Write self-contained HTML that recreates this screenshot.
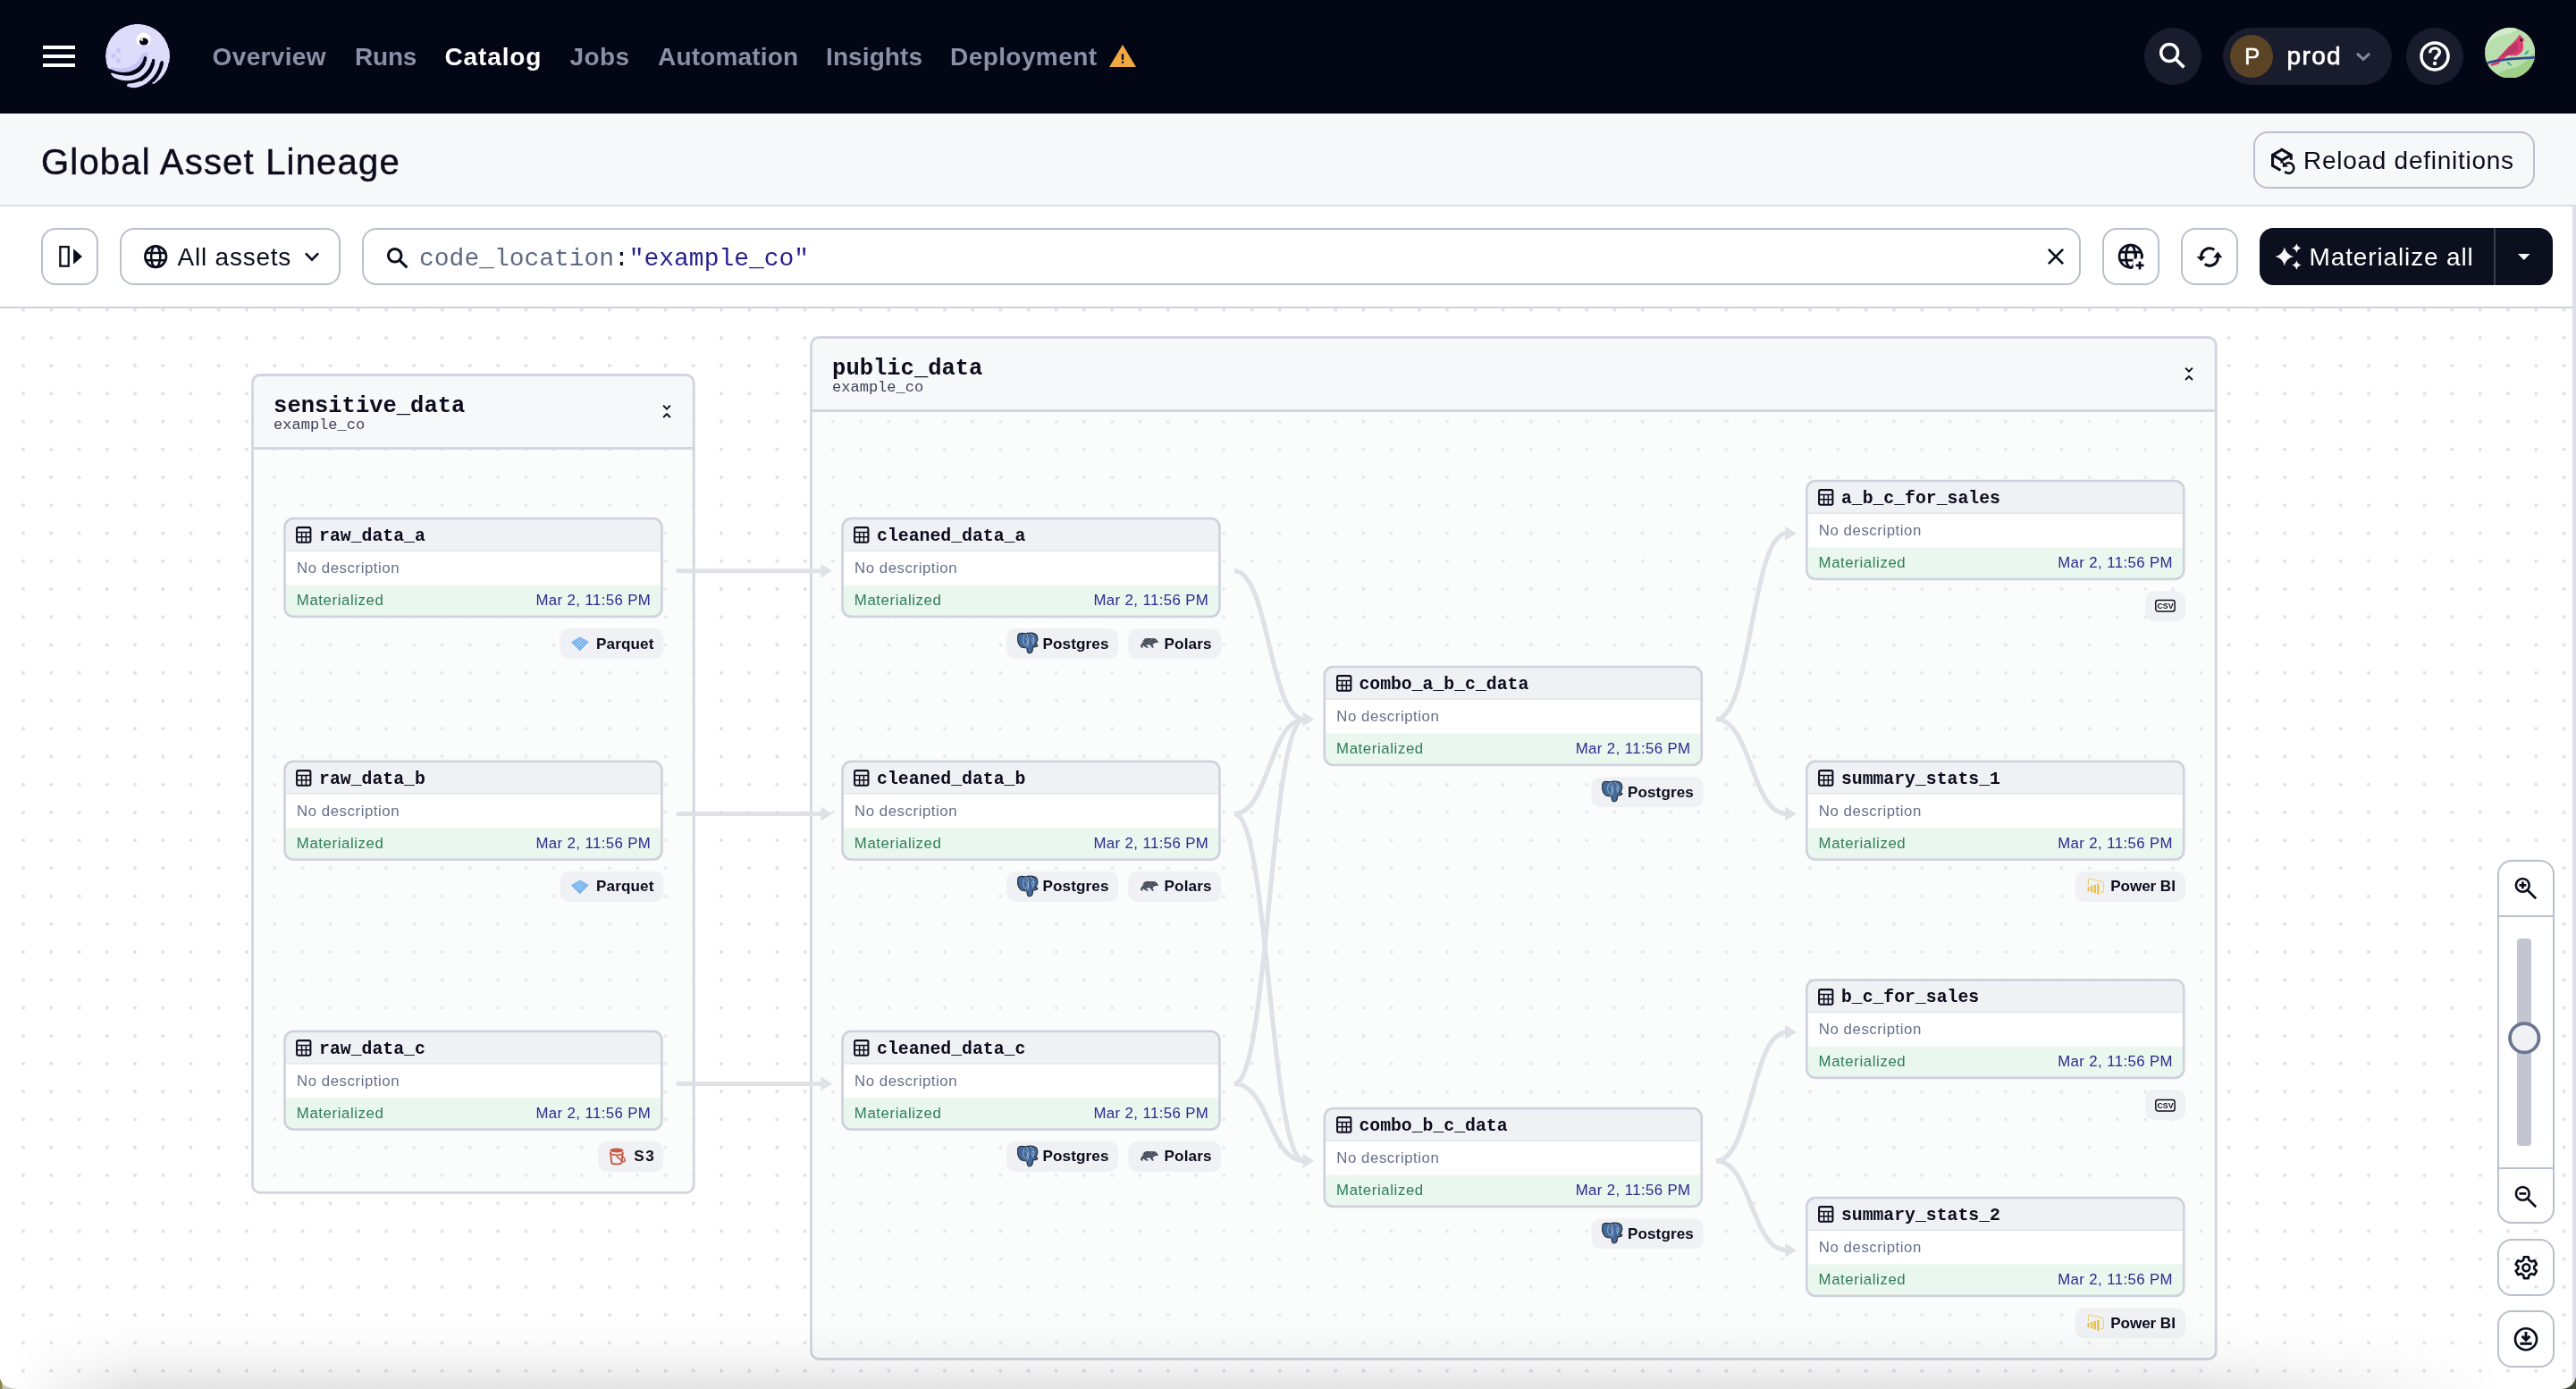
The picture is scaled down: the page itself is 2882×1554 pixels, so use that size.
<!DOCTYPE html>
<html lang="en"><head><meta charset="utf-8"><title>Global Asset Lineage</title>
<style>
html,body{margin:0;padding:0}
body{width:2882px;height:1554px;overflow:hidden;background:#fff;position:relative;font-family:"Liberation Sans",sans-serif;color:#0a0d1c}
.abs,#nav *,#hdr *,#tb *{position:absolute}
#nav{position:absolute;left:0;top:0;width:2882px;height:127px;background:#030615}
#nav .ni{top:50.3px;font:700 28px/28px "Liberation Sans",sans-serif;color:#8a91a6;white-space:pre}
#nav .ni.on{color:#fff}
#nav .circ{background:#191c2c;border-radius:32px;height:64.4px;top:30.7px}
#hdr{position:absolute;left:0;top:127px;width:2882px;height:102px;background:#f7f8fa;border-bottom:2px solid #dadce3}
#hdr h1{margin:0;left:46px;top:33.9px;font:400 40px/40px "Liberation Sans",sans-serif;letter-spacing:1.19px;white-space:pre;-webkit-text-stroke:0.45px #0a0d1c}
.btn{box-sizing:border-box;border:2px solid #b9bfcc;border-radius:16px;height:64px;background:transparent}
#tb{position:absolute;left:0;top:231px;width:2878px;height:112px;background:#fff;border-bottom:2px solid #cfd2db}
#tb .btn{top:24px}
.t28{font:400 28px/28px "Liberation Sans",sans-serif;white-space:pre}
#strip{position:absolute;left:2878px;top:230px;width:4px;height:1324px;background:#dfe0e7}
#graph{position:absolute;left:0;top:345px;width:2878px;height:1209px;overflow:hidden;background:#fff}
#graph svg.shapes{position:absolute;left:0;top:0}
#graph .tx{position:absolute;white-space:pre}
.gt{font:700 25.5px/25.5px "Liberation Mono",monospace;color:#0a0d1c}
.gs{font:400 17px/17px "Liberation Mono",monospace;color:#3b4256}
.nn{font:700 19.8px/19.8px "Liberation Mono",monospace;color:#0a0d1c}
.nd{font:400 16.8px/16.8px "Liberation Sans",sans-serif;color:#67708a;letter-spacing:0.56px}
.mat{font:400 16.8px/16.8px "Liberation Sans",sans-serif;color:#2f7d56;letter-spacing:0.6px}
.ts{font:400 16.8px/16.8px "Liberation Sans",sans-serif;color:#2b2a8f;letter-spacing:0.4px}
.tag{position:absolute;height:34px}
.tag svg{position:absolute}
.tt{position:absolute;top:8.5px;font:700 17.1px/17.1px "Liberation Sans",sans-serif;color:#0a0d1c;white-space:pre;letter-spacing:0.12px}
.ico{position:absolute}
#nav,#hdr,#tb,#graph{will-change:transform}
</style></head>
<body>
<div id="nav">
<svg style="left:48px;top:49px" width="36" height="28" viewBox="0 0 36 28"><path d="M0 4H36M0 14H36M0 24H36" stroke="#fff" stroke-width="4"/></svg>
<svg style="left:100px;top:10px" width="110" height="110" viewBox="0 0 1389 1389">
<defs><clipPath id="lc"><circle cx="681.5" cy="666" r="454"/></clipPath>
<clipPath id="hc"><path d="M0,0H1389V700H800C790,790 700,880 560,900C460,915 360,895 300,870L200,930L0,930Z"/></clipPath>
<clipPath id="ec"><rect x="600" y="300" width="300" height="212"/></clipPath></defs>
<g clip-path="url(#lc)">
<g clip-path="url(#hc)"><circle cx="681.5" cy="666" r="454" fill="#dedcfb"/>
<path d="M300,850C420,905 640,890 740,720C760,680 790,650 830,650" fill="none" stroke="#c9c4f6" stroke-width="80"/>
<circle cx="408" cy="585" r="33" fill="#c9c4f6"/><circle cx="338" cy="658" r="33" fill="#c9c4f6"/><circle cx="408" cy="728" r="33" fill="#c9c4f6"/></g>
<path d="M1000,560L1140,560L1140,760L780,760Z" fill="#dedcfb"/>
<g fill="none" stroke="#dedcfb" stroke-width="70" stroke-linecap="round">
<path d="M848,700C842,800 760,930 620,968C520,992 420,968 338,925"/>
<path d="M965,720C965,820 900,940 790,1020C720,1062 640,1085 565,1088"/>
<path d="M1085,740C1085,840 1020,960 925,1040"/></g>
<g fill="none" stroke="#030615" stroke-width="42" stroke-linecap="round"><path d="M790,692C772,800 665,900 525,915C430,925 345,900 235,845"/><path d="M905,724C897,830 835,935 735,1000"/><path d="M1025,754C1016,850 970,945 900,1015"/></g>
</g>
<g clip-path="url(#ec)"><circle cx="765" cy="437" r="102" fill="#fff"/><ellipse cx="770" cy="462" rx="62" ry="52" fill="#030615"/><circle cx="742" cy="437" r="17" fill="#fff"/></g>
</svg>
<span class="ni" style="left:237.6px;letter-spacing:0.35px">Overview</span>
<span class="ni" style="left:397px;letter-spacing:-0.2px">Runs</span>
<span class="ni on" style="left:497.5px;letter-spacing:0.88px">Catalog</span>
<span class="ni" style="left:637.5px;letter-spacing:0.4px">Jobs</span>
<span class="ni" style="left:736px;letter-spacing:0.17px">Automation</span>
<span class="ni" style="left:924px;letter-spacing:0.1px">Insights</span>
<span class="ni" style="left:1063px;letter-spacing:0.42px">Deployment</span>
<svg style="left:1240px;top:49px" width="32" height="27" viewBox="0 0 32 27"><path d="M16 0.9L31 25.9H1Z" fill="#f0a840"/><rect x="14.85" y="11.3" width="2.3" height="6.6" fill="#0a0d1c"/><rect x="14.85" y="19.6" width="2.3" height="2.1" fill="#0a0d1c"/></svg>
<div class="circ" style="left:2398.8px;width:64.4px"></div>
<svg style="left:2412px;top:44px" width="38" height="38" viewBox="0 0 38 38"><circle cx="15.1" cy="15" r="9.4" fill="none" stroke="#fff" stroke-width="3.5"/><path d="M21.8 21.8L31.4 31.4" stroke="#fff" stroke-width="3.7"/></svg>
<div class="circ" style="left:2486.9px;width:189px"></div>
<div style="left:2494.8px;top:38.6px;width:48.4px;height:48.4px;border-radius:50%;background:#5b4425"></div>
<span style="left:2511px;top:49.8px;font:400 26px/26px 'Liberation Sans',sans-serif;color:#fff;-webkit-text-stroke:0.4px #fff">P</span>
<span style="left:2558.6px;top:49.2px;font:400 28px/28px 'Liberation Sans',sans-serif;color:#fff;letter-spacing:1.35px;-webkit-text-stroke:0.75px #fff">prod</span>
<svg style="left:2634px;top:56px" width="20" height="14" viewBox="0 0 20 14"><path d="M3 3.8L10 10.4L17 3.8" fill="none" stroke="#7d889e" stroke-width="3.1"/></svg>
<div class="circ" style="left:2691.9px;width:64.4px"></div>
<svg style="left:2705px;top:44px" width="38" height="38" viewBox="0 0 38 38"><circle cx="19" cy="18.9" r="15" fill="none" stroke="#fff" stroke-width="3.5"/><path d="M13.6 15.2C13.6 11.6 16.2 9.9 19 9.9C21.8 9.9 24.4 11.7 24.4 14.6C24.4 18 20 18.6 19.3 22.6" fill="none" stroke="#fff" stroke-width="3.4"/><circle cx="19" cy="26.9" r="2.2" fill="#fff"/></svg>
<svg style="left:2779.9px;top:30.8px" width="56.3" height="56.3" viewBox="1430 155 805 805">
<defs><clipPath id="ac"><circle cx="1832.5" cy="557.5" r="402.5"/></clipPath></defs>
<g clip-path="url(#ac)"><rect x="1430" y="155" width="805" height="805" fill="#badfae"/>
<path d="M1430,155H1960C1900,260 1760,250 1640,290C1540,320 1470,400 1430,520Z" fill="#d3ebcc"/>
<path d="M2235,560C2150,580 2120,680 2000,760C1900,820 1760,800 1640,900L1640,960H2235Z" fill="#a0cf88"/>
<path d="M1985,262L2040,322L2076,356L2036,376L2048,470C2040,540 1990,585 1930,602L1800,600L1700,680L1640,740L1530,770L1516,752L1640,640L1800,470L1920,356L1962,300Z" fill="#dc3d72"/>
<path d="M1950,380L1962,520L1820,592L1690,612L1800,480Z" fill="#bd3565"/>
<path d="M1440,728C1650,655 1950,642 2240,632" fill="none" stroke="#2f4c8c" stroke-width="36"/>
<path d="M1995,330L2030,330L2036,376L2000,372Z" fill="#16222a"/>
<path d="M2034,338L2080,356L2038,374Z" fill="#f28b7c"/>
<path d="M2060,590C2070,545 2100,520 2135,515C2130,555 2100,585 2060,590Z" fill="#3aa99a"/>
<path d="M1780,700C1820,700 1850,730 1865,770C1825,765 1795,740 1780,700Z" fill="#3aa99a"/>
</g></svg>
</div>
<div id="hdr">
<h1>Global Asset Lineage</h1>
<div class="btn" style="left:2520.8px;top:19.8px;width:315px"></div>
<svg style="left:2538px;top:36px" width="34" height="34" viewBox="0 0 34 34"><path d="M25.25 15.8V10.3L14.9 4.4L4.55 10.3V22.3L13.5 27.5M4.55 10.3L14.9 16.3L25.25 10.3M14.9 16.3V19.4" fill="none" stroke="#0a0d1c" stroke-width="3.1" stroke-linejoin="miter"/><path d="M18.9 20.5A5.8 5.8 0 1 1 18.2 28.9" fill="none" stroke="#0a0d1c" stroke-width="2.6"/><path d="M15.9 18V23.9L22.2 23.2Z" fill="#0a0d1c"/></svg>
<span class="t28" style="left:2577px;top:39.2px;letter-spacing:0.73px">Reload definitions</span>
</div>
<div id="tb">
<div class="btn" style="left:46.2px;width:63.4px"></div>
<svg style="left:64px;top:42px" width="30" height="28" viewBox="0 0 30 28"><rect x="3.35" y="3.15" width="9.4" height="21.5" fill="none" stroke="#0a0d1c" stroke-width="2.3"/><path d="M18.1 5.3L27.9 14L18.1 22.8Z" fill="#0a0d1c"/></svg>
<div class="btn" style="left:134.3px;width:246.4px"></div>
<svg style="left:158.7px;top:40.9px" width="30" height="30" viewBox="0 0 30 30"><circle cx="15.2" cy="15.1" r="11.8" fill="none" stroke="#0a0d1c" stroke-width="2.7"/><ellipse cx="15.2" cy="15.1" rx="5.1" ry="11.8" fill="none" stroke="#0a0d1c" stroke-width="2.5"/><path d="M4.4 11H26M4.4 19.2H26" stroke="#0a0d1c" stroke-width="2.5"/></svg>
<span class="t28" style="left:198.6px;top:42.7px;letter-spacing:0.77px">All assets</span>
<svg style="left:338px;top:48px" width="22" height="16" viewBox="0 0 22 16"><path d="M3.9 4.3L11 11.6L18.1 4.3" fill="none" stroke="#0a0d1c" stroke-width="2.6"/></svg>
<div class="btn" style="left:405.2px;width:1922.4px"></div>
<svg style="left:430px;top:43px" width="30" height="30" viewBox="0 0 30 30"><circle cx="11.7" cy="11.8" r="7.3" fill="none" stroke="#0a0d1c" stroke-width="3"/><path d="M16.9 17L25.4 25.4" stroke="#0a0d1c" stroke-width="3.1"/></svg>
<span style="left:469.1px;top:45.2px;font:400 27.95px/27.95px 'Liberation Mono',monospace;white-space:pre;color:#606a85"><span style="position:static">code_location</span><span style="position:static;color:#0a0d1c">:</span><span style="position:static;color:#28238c">"example_co"</span></span>
<svg style="left:2288px;top:44px" width="24" height="24" viewBox="0 0 24 24"><path d="M3.9 3.9L20.1 20.1M20.1 3.9L3.9 20.1" stroke="#0a0d1c" stroke-width="2.7"/></svg>
<div class="btn" style="left:2352.3px;width:63.4px"></div>
<svg style="left:2366px;top:38px" width="36" height="36" viewBox="0 0 36 36">
<defs><clipPath id="gp"><path d="M0,0H36V20.5H20.5V36H0Z"/></clipPath></defs>
<g clip-path="url(#gp)" fill="none" stroke="#0a0d1c" stroke-width="2.7"><circle cx="17.7" cy="17.7" r="12.6"/><ellipse cx="17.7" cy="17.7" rx="5.3" ry="12.6"/><path d="M6 13.2H29.5M6 22.2H29.5"/></g>
<path d="M23.6 13.2V19.6M30.3 15V19.6" stroke="#0a0d1c" stroke-width="2.7"/>
<path d="M28 23.4V32.4M23.5 27.9H32.5" stroke="#0a0d1c" stroke-width="2.7"/></svg>
<div class="btn" style="left:2440.2px;width:63.4px"></div>
<svg style="left:2455px;top:41.6px" width="34" height="30" viewBox="0 0 34 30"><path d="M22.3 6.6A9.3 9.3 0 0 0 7.7 14.6" fill="none" stroke="#0a0d1c" stroke-width="3"/><path d="M2.6 14L12.7 14L7.7 19.2Z" fill="#0a0d1c"/><path d="M11.7 22.6A9.3 9.3 0 0 0 26.3 14.6" fill="none" stroke="#0a0d1c" stroke-width="3"/><path d="M21.2 15.2L31.3 15.2L26.3 8.6Z" fill="#0a0d1c"/></svg>
<div style="left:2528px;top:23.8px;width:328px;height:64px;border-radius:15.5px;background:#0c0f1e"></div>
<div style="left:2790px;top:23.8px;width:2px;height:64px;background:#3a3e4e"></div>
<svg style="left:2544px;top:40px" width="34" height="34" viewBox="0 0 34 34"><path d="M11.8 5.6Q13.7 14.1 22.2 16Q13.7 17.9 11.8 26.4Q9.9 17.9 1.4 16Q9.9 14.1 11.8 5.6ZM25.4 1.2Q26.3 5.7 30.8 6.6Q26.3 7.5 25.4 12Q24.5 7.5 20 6.6Q24.5 5.7 25.4 1.2ZM25.4 20.2Q26.3 24.7 30.8 25.6Q26.3 26.5 25.4 31Q24.5 26.5 20 25.6Q24.5 24.7 25.4 20.2Z" fill="#f7f8fa"/></svg>
<span class="t28" style="left:2583.6px;top:42.8px;color:#fff;letter-spacing:0.86px">Materialize all</span>
<svg style="left:2815px;top:51px" width="18" height="10" viewBox="0 0 18 10"><path d="M2 2H15.5L8.75 9Z" fill="#f7f8fa"/></svg>
</div>
<div id="strip"></div>
<div id="graph">
<svg class="shapes" width="2878" height="1209" viewBox="0 0 2878 1209">
<defs><pattern id="dots" x="10.44" y="-13.96" width="31.236" height="31.236" patternUnits="userSpaceOnUse"><circle cx="15.618" cy="15.618" r="1.95" fill="#dfe0e6"/></pattern></defs>
<rect x="0" y="0" width="2878" height="1209" fill="url(#dots)"/>
<rect x="282.5" y="74.5" width="493.7" height="914.9" rx="8.6" fill="#f5f6f8" fill-opacity="0.36"/><path d="M283.9,155V83.1A7.2 7.2 0 0 1 291.1,75.9H767.6A7.2 7.2 0 0 1 774.8,83.1V155Z" fill="#f7f8fa"/><rect x="283.9" y="155" width="490.9" height="3" fill="#d2d5de"/><rect x="282.5" y="74.5" width="493.7" height="914.9" rx="8.6" fill="none" stroke="#d2d5de" stroke-width="2.8"/>
<rect x="907.5" y="32.5" width="1571.7" height="1143" rx="8.6" fill="#f5f6f8" fill-opacity="0.36"/><path d="M908.9,113V41.1A7.2 7.2 0 0 1 916.1,33.9H2470.6A7.2 7.2 0 0 1 2477.8,41.1V113Z" fill="#f7f8fa"/><rect x="908.9" y="113" width="1568.9" height="3" fill="#d2d5de"/><rect x="907.5" y="32.5" width="1571.7" height="1143" rx="8.6" fill="none" stroke="#d2d5de" stroke-width="2.8"/>
<g fill="none" stroke="#e0e1e7" stroke-width="5.2"><path d="M756.8,293.75C838.35,293.75 838.35,293.75 919.9,293.75"/><path d="M756.8,565.5C838.35,565.5 838.35,565.5 919.9,565.5"/><path d="M756.8,867.5C838.35,867.5 838.35,867.5 919.9,867.5"/><path d="M1380.8,293.75C1420,293.75 1420,459.75 1459.2,459.75"/><path d="M1380.8,565.5C1420,565.5 1420,459.75 1459.2,459.75"/><path d="M1380.8,867.5C1420,867.5 1420,459.75 1459.2,459.75"/><path d="M1380.8,565.5C1420,565.5 1420,953.75 1459.2,953.75"/><path d="M1380.8,867.5C1420,867.5 1420,953.75 1459.2,953.75"/><path d="M1920.1,459.75C1959.4,459.75 1959.4,251.75 1998.7,251.75"/><path d="M1920.1,459.75C1959.4,459.75 1959.4,565.5 1998.7,565.5"/><path d="M1920.1,953.75C1959.4,953.75 1959.4,809.85 1998.7,809.85"/><path d="M1920.1,953.75C1959.4,953.75 1959.4,1053.75 1998.7,1053.75"/></g><g fill="#e0e1e7"><path d="M918.3,285.7L931.2,293.75L918.3,301.8Z"/><path d="M918.3,557.45L931.2,565.5L918.3,573.55Z"/><path d="M918.3,859.45L931.2,867.5L918.3,875.55Z"/><path d="M1457.6,451.7L1470.5,459.75L1457.6,467.8Z"/><path d="M1457.6,945.7L1470.5,953.75L1457.6,961.8Z"/><path d="M1997.1,243.7L2010,251.75L1997.1,259.8Z"/><path d="M1997.1,557.45L2010,565.5L1997.1,573.55Z"/><path d="M1997.1,801.8L2010,809.85L1997.1,817.9Z"/><path d="M1997.1,1045.7L2010,1053.75L1997.1,1061.8Z"/></g>
<rect x="318.55" y="235.2" width="421.9" height="109.6" rx="9.8" fill="#fff"/><path d="M319.9,270.45V244.95A8.4 8.4 0 0 1 328.3,236.55H730.7A8.4 8.4 0 0 1 739.1,244.95V270.45Z" fill="#f0f1f4"/><rect x="319.9" y="270.45" width="419.2" height="1.4" fill="#dfe1e7"/><path d="M319.9,309.55H739.1V335.05A8.4 8.4 0 0 1 730.7,343.45H328.3A8.4 8.4 0 0 1 319.9,335.05Z" fill="#e9f7ef"/><rect x="318.55" y="235.2" width="421.9" height="109.6" rx="9.8" fill="none" stroke="#cfd2dc" stroke-width="2.7"/>
<rect x="626.4" y="358.2" width="115.8" height="34" rx="10" fill="#f0f1f4"/>
<rect x="318.55" y="506.95" width="421.9" height="109.6" rx="9.8" fill="#fff"/><path d="M319.9,542.2V516.7A8.4 8.4 0 0 1 328.3,508.3H730.7A8.4 8.4 0 0 1 739.1,516.7V542.2Z" fill="#f0f1f4"/><rect x="319.9" y="542.2" width="419.2" height="1.4" fill="#dfe1e7"/><path d="M319.9,581.3H739.1V606.8A8.4 8.4 0 0 1 730.7,615.2H328.3A8.4 8.4 0 0 1 319.9,606.8Z" fill="#e9f7ef"/><rect x="318.55" y="506.95" width="421.9" height="109.6" rx="9.8" fill="none" stroke="#cfd2dc" stroke-width="2.7"/>
<rect x="626.4" y="629.95" width="115.8" height="34" rx="10" fill="#f0f1f4"/>
<rect x="318.55" y="808.95" width="421.9" height="109.6" rx="9.8" fill="#fff"/><path d="M319.9,844.2V818.7A8.4 8.4 0 0 1 328.3,810.3H730.7A8.4 8.4 0 0 1 739.1,818.7V844.2Z" fill="#f0f1f4"/><rect x="319.9" y="844.2" width="419.2" height="1.4" fill="#dfe1e7"/><path d="M319.9,883.3H739.1V908.8A8.4 8.4 0 0 1 730.7,917.2H328.3A8.4 8.4 0 0 1 319.9,908.8Z" fill="#e9f7ef"/><rect x="318.55" y="808.95" width="421.9" height="109.6" rx="9.8" fill="none" stroke="#cfd2dc" stroke-width="2.7"/>
<rect x="669" y="931.95" width="73.2" height="34" rx="10" fill="#f0f1f4"/>
<rect x="942.55" y="235.2" width="421.9" height="109.6" rx="9.8" fill="#fff"/><path d="M943.9,270.45V244.95A8.4 8.4 0 0 1 952.3,236.55H1354.7A8.4 8.4 0 0 1 1363.1,244.95V270.45Z" fill="#f0f1f4"/><rect x="943.9" y="270.45" width="419.2" height="1.4" fill="#dfe1e7"/><path d="M943.9,309.55H1363.1V335.05A8.4 8.4 0 0 1 1354.7,343.45H952.3A8.4 8.4 0 0 1 943.9,335.05Z" fill="#e9f7ef"/><rect x="942.55" y="235.2" width="421.9" height="109.6" rx="9.8" fill="none" stroke="#cfd2dc" stroke-width="2.7"/>
<rect x="1262.2" y="358.2" width="104" height="34" rx="10" fill="#f0f1f4"/>
<rect x="1126.1" y="358.2" width="125" height="34" rx="10" fill="#f0f1f4"/>
<rect x="942.55" y="506.95" width="421.9" height="109.6" rx="9.8" fill="#fff"/><path d="M943.9,542.2V516.7A8.4 8.4 0 0 1 952.3,508.3H1354.7A8.4 8.4 0 0 1 1363.1,516.7V542.2Z" fill="#f0f1f4"/><rect x="943.9" y="542.2" width="419.2" height="1.4" fill="#dfe1e7"/><path d="M943.9,581.3H1363.1V606.8A8.4 8.4 0 0 1 1354.7,615.2H952.3A8.4 8.4 0 0 1 943.9,606.8Z" fill="#e9f7ef"/><rect x="942.55" y="506.95" width="421.9" height="109.6" rx="9.8" fill="none" stroke="#cfd2dc" stroke-width="2.7"/>
<rect x="1262.2" y="629.95" width="104" height="34" rx="10" fill="#f0f1f4"/>
<rect x="1126.1" y="629.95" width="125" height="34" rx="10" fill="#f0f1f4"/>
<rect x="942.55" y="808.95" width="421.9" height="109.6" rx="9.8" fill="#fff"/><path d="M943.9,844.2V818.7A8.4 8.4 0 0 1 952.3,810.3H1354.7A8.4 8.4 0 0 1 1363.1,818.7V844.2Z" fill="#f0f1f4"/><rect x="943.9" y="844.2" width="419.2" height="1.4" fill="#dfe1e7"/><path d="M943.9,883.3H1363.1V908.8A8.4 8.4 0 0 1 1354.7,917.2H952.3A8.4 8.4 0 0 1 943.9,908.8Z" fill="#e9f7ef"/><rect x="942.55" y="808.95" width="421.9" height="109.6" rx="9.8" fill="none" stroke="#cfd2dc" stroke-width="2.7"/>
<rect x="1262.2" y="931.95" width="104" height="34" rx="10" fill="#f0f1f4"/>
<rect x="1126.1" y="931.95" width="125" height="34" rx="10" fill="#f0f1f4"/>
<rect x="1481.85" y="401.2" width="421.9" height="109.6" rx="9.8" fill="#fff"/><path d="M1483.2,436.45V410.95A8.4 8.4 0 0 1 1491.6,402.55H1894A8.4 8.4 0 0 1 1902.4,410.95V436.45Z" fill="#f0f1f4"/><rect x="1483.2" y="436.45" width="419.2" height="1.4" fill="#dfe1e7"/><path d="M1483.2,475.55H1902.4V501.05A8.4 8.4 0 0 1 1894,509.45H1491.6A8.4 8.4 0 0 1 1483.2,501.05Z" fill="#e9f7ef"/><rect x="1481.85" y="401.2" width="421.9" height="109.6" rx="9.8" fill="none" stroke="#cfd2dc" stroke-width="2.7"/>
<rect x="1780.5" y="524.2" width="125" height="34" rx="10" fill="#f0f1f4"/>
<rect x="1481.85" y="895.2" width="421.9" height="109.6" rx="9.8" fill="#fff"/><path d="M1483.2,930.45V904.95A8.4 8.4 0 0 1 1491.6,896.55H1894A8.4 8.4 0 0 1 1902.4,904.95V930.45Z" fill="#f0f1f4"/><rect x="1483.2" y="930.45" width="419.2" height="1.4" fill="#dfe1e7"/><path d="M1483.2,969.55H1902.4V995.05A8.4 8.4 0 0 1 1894,1003.45H1491.6A8.4 8.4 0 0 1 1483.2,995.05Z" fill="#e9f7ef"/><rect x="1481.85" y="895.2" width="421.9" height="109.6" rx="9.8" fill="none" stroke="#cfd2dc" stroke-width="2.7"/>
<rect x="1780.5" y="1018.2" width="125" height="34" rx="10" fill="#f0f1f4"/>
<rect x="2021.35" y="193.2" width="421.9" height="109.6" rx="9.8" fill="#fff"/><path d="M2022.7,228.45V202.95A8.4 8.4 0 0 1 2031.1,194.55H2433.5A8.4 8.4 0 0 1 2441.9,202.95V228.45Z" fill="#f0f1f4"/><rect x="2022.7" y="228.45" width="419.2" height="1.4" fill="#dfe1e7"/><path d="M2022.7,267.55H2441.9V293.05A8.4 8.4 0 0 1 2433.5,301.45H2031.1A8.4 8.4 0 0 1 2022.7,293.05Z" fill="#e9f7ef"/><rect x="2021.35" y="193.2" width="421.9" height="109.6" rx="9.8" fill="none" stroke="#cfd2dc" stroke-width="2.7"/>
<rect x="2400" y="316.2" width="45" height="34" rx="10" fill="#f0f1f4"/>
<rect x="2021.35" y="506.95" width="421.9" height="109.6" rx="9.8" fill="#fff"/><path d="M2022.7,542.2V516.7A8.4 8.4 0 0 1 2031.1,508.3H2433.5A8.4 8.4 0 0 1 2441.9,516.7V542.2Z" fill="#f0f1f4"/><rect x="2022.7" y="542.2" width="419.2" height="1.4" fill="#dfe1e7"/><path d="M2022.7,581.3H2441.9V606.8A8.4 8.4 0 0 1 2433.5,615.2H2031.1A8.4 8.4 0 0 1 2022.7,606.8Z" fill="#e9f7ef"/><rect x="2021.35" y="506.95" width="421.9" height="109.6" rx="9.8" fill="none" stroke="#cfd2dc" stroke-width="2.7"/>
<rect x="2321.8" y="629.95" width="123.2" height="34" rx="10" fill="#f0f1f4"/>
<rect x="2021.35" y="751.3" width="421.9" height="109.6" rx="9.8" fill="#fff"/><path d="M2022.7,786.55V761.05A8.4 8.4 0 0 1 2031.1,752.65H2433.5A8.4 8.4 0 0 1 2441.9,761.05V786.55Z" fill="#f0f1f4"/><rect x="2022.7" y="786.55" width="419.2" height="1.4" fill="#dfe1e7"/><path d="M2022.7,825.65H2441.9V851.15A8.4 8.4 0 0 1 2433.5,859.55H2031.1A8.4 8.4 0 0 1 2022.7,851.15Z" fill="#e9f7ef"/><rect x="2021.35" y="751.3" width="421.9" height="109.6" rx="9.8" fill="none" stroke="#cfd2dc" stroke-width="2.7"/>
<rect x="2400" y="874.3" width="45" height="34" rx="10" fill="#f0f1f4"/>
<rect x="2021.35" y="995.2" width="421.9" height="109.6" rx="9.8" fill="#fff"/><path d="M2022.7,1030.45V1004.95A8.4 8.4 0 0 1 2031.1,996.55H2433.5A8.4 8.4 0 0 1 2441.9,1004.95V1030.45Z" fill="#f0f1f4"/><rect x="2022.7" y="1030.45" width="419.2" height="1.4" fill="#dfe1e7"/><path d="M2022.7,1069.55H2441.9V1095.05A8.4 8.4 0 0 1 2433.5,1103.45H2031.1A8.4 8.4 0 0 1 2022.7,1095.05Z" fill="#e9f7ef"/><rect x="2021.35" y="995.2" width="421.9" height="109.6" rx="9.8" fill="none" stroke="#cfd2dc" stroke-width="2.7"/>
<rect x="2321.8" y="1118.2" width="123.2" height="34" rx="10" fill="#f0f1f4"/>
</svg>
<span class="tx gt" style="left:306.1px;top:96.7px">sensitive_data</span>
<span class="tx gs" style="left:306.1px;top:122.3px">example_co</span>
<svg class="ico" style="left:740.4px;top:107.1px" width="12" height="18" viewBox="0 0 12 18"><path d="M2.1 1.6L6 5.7L9.9 1.6M2.1 15L6 11L9.9 15" fill="none" stroke="#0a0d1c" stroke-width="1.9"/></svg>
<span class="tx gt" style="left:931.1px;top:54.7px">public_data</span>
<span class="tx gs" style="left:931.1px;top:80.3px">example_co</span>
<svg class="ico" style="left:2443.4px;top:65.1px" width="12" height="18" viewBox="0 0 12 18"><path d="M2.1 1.6L6 5.7L9.9 1.6M2.1 15L6 11L9.9 15" fill="none" stroke="#0a0d1c" stroke-width="1.9"/></svg>
<svg class="ico" style="left:331.3px;top:244.4px" width="18" height="19" viewBox="0 0 18 19"><rect x="1.1" y="1.1" width="15.3" height="16.6" rx="1.6" fill="none" stroke="#0a0d1c" stroke-width="2.05"/><path d="M1 6.6H16.5M1 11.8H16.5M6.6 6.6V17.5M11.4 6.6V17.5" stroke="#0a0d1c" stroke-width="1.5" fill="none"/></svg>
<span class="tx nn" style="left:357.1px;top:245.9px">raw_data_a</span>
<span class="tx nd" style="left:332px;top:283px">No description</span>
<span class="tx mat" style="left:331.8px;top:319px">Materialized</span>
<span class="tx ts" style="right:2149.8px;top:319px">Mar 2, 11:56 PM</span>
<div class="tag" style="left:626.4px;top:358.2px;width:115.8px"><svg width="40" height="40" viewBox="0 0 1389 1389" style="left:3.6px;top:-3.2px"><defs><clipPath id="pqk"><path d="M660 428L1004 630L650 990L306 630Z"/></clipPath></defs><g clip-path="url(#pqk)"><path d="M346 1247L1259 322M291 1193L1204 267M235 1138L1148 212M180 1083L1092 157M124 1028L1037 103M69 974L981 48M13 919L926 -7" stroke="#5ea6ee" stroke-width="60" fill="none"/><path d="M627 794L364 534M751 783L431 467M761 659L497 399M767 539L561 335" stroke="#eef1f6" stroke-width="20" fill="none" opacity="0.62"/></g></svg><span class="tt" style="left:40.6px">Parquet</span></div>
<svg class="ico" style="left:331.3px;top:516.15px" width="18" height="19" viewBox="0 0 18 19"><rect x="1.1" y="1.1" width="15.3" height="16.6" rx="1.6" fill="none" stroke="#0a0d1c" stroke-width="2.05"/><path d="M1 6.6H16.5M1 11.8H16.5M6.6 6.6V17.5M11.4 6.6V17.5" stroke="#0a0d1c" stroke-width="1.5" fill="none"/></svg>
<span class="tx nn" style="left:357.1px;top:517.65px">raw_data_b</span>
<span class="tx nd" style="left:332px;top:554.75px">No description</span>
<span class="tx mat" style="left:331.8px;top:590.75px">Materialized</span>
<span class="tx ts" style="right:2149.8px;top:590.75px">Mar 2, 11:56 PM</span>
<div class="tag" style="left:626.4px;top:629.95px;width:115.8px"><svg width="40" height="40" viewBox="0 0 1389 1389" style="left:3.6px;top:-3.2px"><defs><clipPath id="pqk"><path d="M660 428L1004 630L650 990L306 630Z"/></clipPath></defs><g clip-path="url(#pqk)"><path d="M346 1247L1259 322M291 1193L1204 267M235 1138L1148 212M180 1083L1092 157M124 1028L1037 103M69 974L981 48M13 919L926 -7" stroke="#5ea6ee" stroke-width="60" fill="none"/><path d="M627 794L364 534M751 783L431 467M761 659L497 399M767 539L561 335" stroke="#eef1f6" stroke-width="20" fill="none" opacity="0.62"/></g></svg><span class="tt" style="left:40.6px">Parquet</span></div>
<svg class="ico" style="left:331.3px;top:818.15px" width="18" height="19" viewBox="0 0 18 19"><rect x="1.1" y="1.1" width="15.3" height="16.6" rx="1.6" fill="none" stroke="#0a0d1c" stroke-width="2.05"/><path d="M1 6.6H16.5M1 11.8H16.5M6.6 6.6V17.5M11.4 6.6V17.5" stroke="#0a0d1c" stroke-width="1.5" fill="none"/></svg>
<span class="tx nn" style="left:357.1px;top:819.65px">raw_data_c</span>
<span class="tx nd" style="left:332px;top:856.75px">No description</span>
<span class="tx mat" style="left:331.8px;top:892.75px">Materialized</span>
<span class="tx ts" style="right:2149.8px;top:892.75px">Mar 2, 11:56 PM</span>
<div class="tag" style="left:669px;top:931.95px;width:73.2px"><svg width="19" height="20" viewBox="0 0 19 20" style="left:12.6px;top:6.9px"><ellipse cx="7.9" cy="2.9" rx="7.5" ry="2.5" fill="#c95a48"/><path d="M0.9 4.6L2.3 17.2C3.6 18.9 12 18.9 13.4 17.2L14.8 4.6" fill="none" stroke="#c95a48" stroke-width="1.95"/><path d="M1.2 7C4 8.6 11.8 8.6 14.6 7" fill="none" stroke="#c95a48" stroke-width="1.6"/><path d="M7.6 9.4L14.3 15.4" stroke="#c95a48" stroke-width="1.7" fill="none"/><path d="M14.4 9.6C16.6 11.4 18 14.4 16.8 15.4C16 16 14.8 15.6 13.9 14.9" fill="none" stroke="#c95a48" stroke-width="1.5"/></svg><span class="tt" style="left:40.2px;letter-spacing:1.6px">S3</span></div>
<svg class="ico" style="left:955.3px;top:244.4px" width="18" height="19" viewBox="0 0 18 19"><rect x="1.1" y="1.1" width="15.3" height="16.6" rx="1.6" fill="none" stroke="#0a0d1c" stroke-width="2.05"/><path d="M1 6.6H16.5M1 11.8H16.5M6.6 6.6V17.5M11.4 6.6V17.5" stroke="#0a0d1c" stroke-width="1.5" fill="none"/></svg>
<span class="tx nn" style="left:981.1px;top:245.9px">cleaned_data_a</span>
<span class="tx nd" style="left:956px;top:283px">No description</span>
<span class="tx mat" style="left:955.8px;top:319px">Materialized</span>
<span class="tx ts" style="right:1525.8px;top:319px">Mar 2, 11:56 PM</span>
<div class="tag" style="left:1262.2px;top:358.2px;width:104px"><svg width="40" height="40" viewBox="0 0 1389 1389" style="left:3.8px;top:-3.2px"><path d="M430 640C440 560 500 500 580 490L900 495C945 505 972 540 1000 580L1045 632L1032 655L905 672C862 690 832 722 818 760L872 845L800 862L742 772L700 742L592 746L562 780L655 828L640 862L560 852L480 792L452 762L425 800L442 860L372 852L342 790C362 740 402 700 430 640Z" fill="#454b5b"/><g fill="#c9ccd5"><circle cx="600" cy="610" r="15"/><circle cx="680" cy="570" r="15"/><circle cx="640" cy="682" r="15"/><circle cx="742" cy="680" r="15"/><circle cx="468" cy="642" r="15"/><circle cx="535" cy="655" r="15"/><circle cx="762" cy="600" r="15"/><circle cx="892" cy="572" r="15"/><circle cx="482" cy="598" r="15"/><circle cx="572" cy="532" r="15"/><circle cx="812" cy="642" r="15"/><circle cx="702" cy="632" r="15"/><circle cx="520" cy="720" r="15"/><circle cx="780" cy="540" r="15"/></g></svg><span class="tt" style="left:40.4px">Polars</span></div>
<div class="tag" style="left:1126.1px;top:358.2px;width:125px"><svg width="40" height="40" viewBox="0 0 1389 1389" style="left:3.9px;top:-3.2px"><path d="M300 400C320 320 370 290 440 290C500 288 560 298 600 315C640 292 700 285 780 283C900 280 1010 320 1050 400C1085 480 1060 600 1040 640C1020 680 990 705 965 722C1000 735 1050 735 1068 752C1082 775 1060 800 1020 812C980 824 930 826 892 830C888 900 880 985 840 1040C810 1075 740 1080 700 1050C665 1020 662 940 660 880C655 862 648 852 640 850C600 862 540 858 500 850C430 835 380 790 345 720C310 650 285 520 300 400Z" fill="#42699b" stroke="#2b2e36" stroke-width="40" stroke-linejoin="round"/><path d="M565 365C520 420 500 520 510 600C520 690 560 760 610 762C660 760 675 690 672 600C668 540 640 495 595 478M800 330C880 380 925 460 930 560C932 620 915 680 895 715M830 525C850 495 890 488 925 505M862 560C858 600 862 640 880 670M660 850C700 820 720 700 715 560C712 470 690 380 640 320" fill="none" stroke="#cbd9ea" stroke-width="24" stroke-linecap="round" opacity="0.9"/></svg><span class="tt" style="left:40.4px">Postgres</span></div>
<svg class="ico" style="left:955.3px;top:516.15px" width="18" height="19" viewBox="0 0 18 19"><rect x="1.1" y="1.1" width="15.3" height="16.6" rx="1.6" fill="none" stroke="#0a0d1c" stroke-width="2.05"/><path d="M1 6.6H16.5M1 11.8H16.5M6.6 6.6V17.5M11.4 6.6V17.5" stroke="#0a0d1c" stroke-width="1.5" fill="none"/></svg>
<span class="tx nn" style="left:981.1px;top:517.65px">cleaned_data_b</span>
<span class="tx nd" style="left:956px;top:554.75px">No description</span>
<span class="tx mat" style="left:955.8px;top:590.75px">Materialized</span>
<span class="tx ts" style="right:1525.8px;top:590.75px">Mar 2, 11:56 PM</span>
<div class="tag" style="left:1262.2px;top:629.95px;width:104px"><svg width="40" height="40" viewBox="0 0 1389 1389" style="left:3.8px;top:-3.2px"><path d="M430 640C440 560 500 500 580 490L900 495C945 505 972 540 1000 580L1045 632L1032 655L905 672C862 690 832 722 818 760L872 845L800 862L742 772L700 742L592 746L562 780L655 828L640 862L560 852L480 792L452 762L425 800L442 860L372 852L342 790C362 740 402 700 430 640Z" fill="#454b5b"/><g fill="#c9ccd5"><circle cx="600" cy="610" r="15"/><circle cx="680" cy="570" r="15"/><circle cx="640" cy="682" r="15"/><circle cx="742" cy="680" r="15"/><circle cx="468" cy="642" r="15"/><circle cx="535" cy="655" r="15"/><circle cx="762" cy="600" r="15"/><circle cx="892" cy="572" r="15"/><circle cx="482" cy="598" r="15"/><circle cx="572" cy="532" r="15"/><circle cx="812" cy="642" r="15"/><circle cx="702" cy="632" r="15"/><circle cx="520" cy="720" r="15"/><circle cx="780" cy="540" r="15"/></g></svg><span class="tt" style="left:40.4px">Polars</span></div>
<div class="tag" style="left:1126.1px;top:629.95px;width:125px"><svg width="40" height="40" viewBox="0 0 1389 1389" style="left:3.9px;top:-3.2px"><path d="M300 400C320 320 370 290 440 290C500 288 560 298 600 315C640 292 700 285 780 283C900 280 1010 320 1050 400C1085 480 1060 600 1040 640C1020 680 990 705 965 722C1000 735 1050 735 1068 752C1082 775 1060 800 1020 812C980 824 930 826 892 830C888 900 880 985 840 1040C810 1075 740 1080 700 1050C665 1020 662 940 660 880C655 862 648 852 640 850C600 862 540 858 500 850C430 835 380 790 345 720C310 650 285 520 300 400Z" fill="#42699b" stroke="#2b2e36" stroke-width="40" stroke-linejoin="round"/><path d="M565 365C520 420 500 520 510 600C520 690 560 760 610 762C660 760 675 690 672 600C668 540 640 495 595 478M800 330C880 380 925 460 930 560C932 620 915 680 895 715M830 525C850 495 890 488 925 505M862 560C858 600 862 640 880 670M660 850C700 820 720 700 715 560C712 470 690 380 640 320" fill="none" stroke="#cbd9ea" stroke-width="24" stroke-linecap="round" opacity="0.9"/></svg><span class="tt" style="left:40.4px">Postgres</span></div>
<svg class="ico" style="left:955.3px;top:818.15px" width="18" height="19" viewBox="0 0 18 19"><rect x="1.1" y="1.1" width="15.3" height="16.6" rx="1.6" fill="none" stroke="#0a0d1c" stroke-width="2.05"/><path d="M1 6.6H16.5M1 11.8H16.5M6.6 6.6V17.5M11.4 6.6V17.5" stroke="#0a0d1c" stroke-width="1.5" fill="none"/></svg>
<span class="tx nn" style="left:981.1px;top:819.65px">cleaned_data_c</span>
<span class="tx nd" style="left:956px;top:856.75px">No description</span>
<span class="tx mat" style="left:955.8px;top:892.75px">Materialized</span>
<span class="tx ts" style="right:1525.8px;top:892.75px">Mar 2, 11:56 PM</span>
<div class="tag" style="left:1262.2px;top:931.95px;width:104px"><svg width="40" height="40" viewBox="0 0 1389 1389" style="left:3.8px;top:-3.2px"><path d="M430 640C440 560 500 500 580 490L900 495C945 505 972 540 1000 580L1045 632L1032 655L905 672C862 690 832 722 818 760L872 845L800 862L742 772L700 742L592 746L562 780L655 828L640 862L560 852L480 792L452 762L425 800L442 860L372 852L342 790C362 740 402 700 430 640Z" fill="#454b5b"/><g fill="#c9ccd5"><circle cx="600" cy="610" r="15"/><circle cx="680" cy="570" r="15"/><circle cx="640" cy="682" r="15"/><circle cx="742" cy="680" r="15"/><circle cx="468" cy="642" r="15"/><circle cx="535" cy="655" r="15"/><circle cx="762" cy="600" r="15"/><circle cx="892" cy="572" r="15"/><circle cx="482" cy="598" r="15"/><circle cx="572" cy="532" r="15"/><circle cx="812" cy="642" r="15"/><circle cx="702" cy="632" r="15"/><circle cx="520" cy="720" r="15"/><circle cx="780" cy="540" r="15"/></g></svg><span class="tt" style="left:40.4px">Polars</span></div>
<div class="tag" style="left:1126.1px;top:931.95px;width:125px"><svg width="40" height="40" viewBox="0 0 1389 1389" style="left:3.9px;top:-3.2px"><path d="M300 400C320 320 370 290 440 290C500 288 560 298 600 315C640 292 700 285 780 283C900 280 1010 320 1050 400C1085 480 1060 600 1040 640C1020 680 990 705 965 722C1000 735 1050 735 1068 752C1082 775 1060 800 1020 812C980 824 930 826 892 830C888 900 880 985 840 1040C810 1075 740 1080 700 1050C665 1020 662 940 660 880C655 862 648 852 640 850C600 862 540 858 500 850C430 835 380 790 345 720C310 650 285 520 300 400Z" fill="#42699b" stroke="#2b2e36" stroke-width="40" stroke-linejoin="round"/><path d="M565 365C520 420 500 520 510 600C520 690 560 760 610 762C660 760 675 690 672 600C668 540 640 495 595 478M800 330C880 380 925 460 930 560C932 620 915 680 895 715M830 525C850 495 890 488 925 505M862 560C858 600 862 640 880 670M660 850C700 820 720 700 715 560C712 470 690 380 640 320" fill="none" stroke="#cbd9ea" stroke-width="24" stroke-linecap="round" opacity="0.9"/></svg><span class="tt" style="left:40.4px">Postgres</span></div>
<svg class="ico" style="left:1494.6px;top:410.4px" width="18" height="19" viewBox="0 0 18 19"><rect x="1.1" y="1.1" width="15.3" height="16.6" rx="1.6" fill="none" stroke="#0a0d1c" stroke-width="2.05"/><path d="M1 6.6H16.5M1 11.8H16.5M6.6 6.6V17.5M11.4 6.6V17.5" stroke="#0a0d1c" stroke-width="1.5" fill="none"/></svg>
<span class="tx nn" style="left:1520.4px;top:411.9px">combo_a_b_c_data</span>
<span class="tx nd" style="left:1495.3px;top:449px">No description</span>
<span class="tx mat" style="left:1495.1px;top:485px">Materialized</span>
<span class="tx ts" style="right:986.5px;top:485px">Mar 2, 11:56 PM</span>
<div class="tag" style="left:1780.5px;top:524.2px;width:125px"><svg width="40" height="40" viewBox="0 0 1389 1389" style="left:3.9px;top:-3.2px"><path d="M300 400C320 320 370 290 440 290C500 288 560 298 600 315C640 292 700 285 780 283C900 280 1010 320 1050 400C1085 480 1060 600 1040 640C1020 680 990 705 965 722C1000 735 1050 735 1068 752C1082 775 1060 800 1020 812C980 824 930 826 892 830C888 900 880 985 840 1040C810 1075 740 1080 700 1050C665 1020 662 940 660 880C655 862 648 852 640 850C600 862 540 858 500 850C430 835 380 790 345 720C310 650 285 520 300 400Z" fill="#42699b" stroke="#2b2e36" stroke-width="40" stroke-linejoin="round"/><path d="M565 365C520 420 500 520 510 600C520 690 560 760 610 762C660 760 675 690 672 600C668 540 640 495 595 478M800 330C880 380 925 460 930 560C932 620 915 680 895 715M830 525C850 495 890 488 925 505M862 560C858 600 862 640 880 670M660 850C700 820 720 700 715 560C712 470 690 380 640 320" fill="none" stroke="#cbd9ea" stroke-width="24" stroke-linecap="round" opacity="0.9"/></svg><span class="tt" style="left:40.4px">Postgres</span></div>
<svg class="ico" style="left:1494.6px;top:904.4px" width="18" height="19" viewBox="0 0 18 19"><rect x="1.1" y="1.1" width="15.3" height="16.6" rx="1.6" fill="none" stroke="#0a0d1c" stroke-width="2.05"/><path d="M1 6.6H16.5M1 11.8H16.5M6.6 6.6V17.5M11.4 6.6V17.5" stroke="#0a0d1c" stroke-width="1.5" fill="none"/></svg>
<span class="tx nn" style="left:1520.4px;top:905.9px">combo_b_c_data</span>
<span class="tx nd" style="left:1495.3px;top:943px">No description</span>
<span class="tx mat" style="left:1495.1px;top:979px">Materialized</span>
<span class="tx ts" style="right:986.5px;top:979px">Mar 2, 11:56 PM</span>
<div class="tag" style="left:1780.5px;top:1018.2px;width:125px"><svg width="40" height="40" viewBox="0 0 1389 1389" style="left:3.9px;top:-3.2px"><path d="M300 400C320 320 370 290 440 290C500 288 560 298 600 315C640 292 700 285 780 283C900 280 1010 320 1050 400C1085 480 1060 600 1040 640C1020 680 990 705 965 722C1000 735 1050 735 1068 752C1082 775 1060 800 1020 812C980 824 930 826 892 830C888 900 880 985 840 1040C810 1075 740 1080 700 1050C665 1020 662 940 660 880C655 862 648 852 640 850C600 862 540 858 500 850C430 835 380 790 345 720C310 650 285 520 300 400Z" fill="#42699b" stroke="#2b2e36" stroke-width="40" stroke-linejoin="round"/><path d="M565 365C520 420 500 520 510 600C520 690 560 760 610 762C660 760 675 690 672 600C668 540 640 495 595 478M800 330C880 380 925 460 930 560C932 620 915 680 895 715M830 525C850 495 890 488 925 505M862 560C858 600 862 640 880 670M660 850C700 820 720 700 715 560C712 470 690 380 640 320" fill="none" stroke="#cbd9ea" stroke-width="24" stroke-linecap="round" opacity="0.9"/></svg><span class="tt" style="left:40.4px">Postgres</span></div>
<svg class="ico" style="left:2034.1px;top:202.4px" width="18" height="19" viewBox="0 0 18 19"><rect x="1.1" y="1.1" width="15.3" height="16.6" rx="1.6" fill="none" stroke="#0a0d1c" stroke-width="2.05"/><path d="M1 6.6H16.5M1 11.8H16.5M6.6 6.6V17.5M11.4 6.6V17.5" stroke="#0a0d1c" stroke-width="1.5" fill="none"/></svg>
<span class="tx nn" style="left:2059.9px;top:203.9px">a_b_c_for_sales</span>
<span class="tx nd" style="left:2034.8px;top:241px">No description</span>
<span class="tx mat" style="left:2034.6px;top:277px">Materialized</span>
<span class="tx ts" style="right:447px;top:277px">Mar 2, 11:56 PM</span>
<div class="tag" style="left:2400px;top:316.2px;width:45px"><svg width="24" height="16" viewBox="0 0 24 16" style="left:10.5px;top:9.3px"><rect x="0.8" y="1.4" width="21.3" height="12.6" rx="2.5" fill="#fafafb" stroke="#0a0d1c" stroke-width="1.45"/><text x="11.55" y="11.05" text-anchor="middle" font-family="Liberation Sans, sans-serif" font-weight="700" font-size="8.9" fill="#0a0d1c" letter-spacing="0">CSV</text></svg></div>
<svg class="ico" style="left:2034.1px;top:516.15px" width="18" height="19" viewBox="0 0 18 19"><rect x="1.1" y="1.1" width="15.3" height="16.6" rx="1.6" fill="none" stroke="#0a0d1c" stroke-width="2.05"/><path d="M1 6.6H16.5M1 11.8H16.5M6.6 6.6V17.5M11.4 6.6V17.5" stroke="#0a0d1c" stroke-width="1.5" fill="none"/></svg>
<span class="tx nn" style="left:2059.9px;top:517.65px">summary_stats_1</span>
<span class="tx nd" style="left:2034.8px;top:554.75px">No description</span>
<span class="tx mat" style="left:2034.6px;top:590.75px">Materialized</span>
<span class="tx ts" style="right:447px;top:590.75px">Mar 2, 11:56 PM</span>
<div class="tag" style="left:2321.8px;top:629.95px;width:123.2px"><svg width="20" height="20" viewBox="0 0 20 20" style="left:13.5px;top:6.8px"><path d="M1.4 8.2V1.6C1.4 1.1 1.8 0.9 2.3 1L17.4 4.4C18 4.6 18.3 5 18.3 5.6V15.6C18.3 16.2 17.9 16.5 17.3 16.5H15.2" fill="none" stroke="#ecc956" stroke-width="0.9"/><rect x="0.4" y="10" width="2.3" height="5.2" rx="1.1" fill="#e8c242"/><rect x="4.1" y="8.8" width="2.3" height="7.6" rx="1.1" fill="#e8c242"/><rect x="7.6" y="7.8" width="2.4" height="9.8" rx="1.1" fill="#e8c242"/><rect x="11.1" y="6.4" width="2.5" height="12.4" rx="1.1" fill="#e8c242"/></svg><span class="tt" style="left:39.5px;letter-spacing:-0.08px">Power BI</span></div>
<svg class="ico" style="left:2034.1px;top:760.5px" width="18" height="19" viewBox="0 0 18 19"><rect x="1.1" y="1.1" width="15.3" height="16.6" rx="1.6" fill="none" stroke="#0a0d1c" stroke-width="2.05"/><path d="M1 6.6H16.5M1 11.8H16.5M6.6 6.6V17.5M11.4 6.6V17.5" stroke="#0a0d1c" stroke-width="1.5" fill="none"/></svg>
<span class="tx nn" style="left:2059.9px;top:762px">b_c_for_sales</span>
<span class="tx nd" style="left:2034.8px;top:799.1px">No description</span>
<span class="tx mat" style="left:2034.6px;top:835.1px">Materialized</span>
<span class="tx ts" style="right:447px;top:835.1px">Mar 2, 11:56 PM</span>
<div class="tag" style="left:2400px;top:874.3px;width:45px"><svg width="24" height="16" viewBox="0 0 24 16" style="left:10.5px;top:9.3px"><rect x="0.8" y="1.4" width="21.3" height="12.6" rx="2.5" fill="#fafafb" stroke="#0a0d1c" stroke-width="1.45"/><text x="11.55" y="11.05" text-anchor="middle" font-family="Liberation Sans, sans-serif" font-weight="700" font-size="8.9" fill="#0a0d1c" letter-spacing="0">CSV</text></svg></div>
<svg class="ico" style="left:2034.1px;top:1004.4px" width="18" height="19" viewBox="0 0 18 19"><rect x="1.1" y="1.1" width="15.3" height="16.6" rx="1.6" fill="none" stroke="#0a0d1c" stroke-width="2.05"/><path d="M1 6.6H16.5M1 11.8H16.5M6.6 6.6V17.5M11.4 6.6V17.5" stroke="#0a0d1c" stroke-width="1.5" fill="none"/></svg>
<span class="tx nn" style="left:2059.9px;top:1005.9px">summary_stats_2</span>
<span class="tx nd" style="left:2034.8px;top:1043px">No description</span>
<span class="tx mat" style="left:2034.6px;top:1079px">Materialized</span>
<span class="tx ts" style="right:447px;top:1079px">Mar 2, 11:56 PM</span>
<div class="tag" style="left:2321.8px;top:1118.2px;width:123.2px"><svg width="20" height="20" viewBox="0 0 20 20" style="left:13.5px;top:6.8px"><path d="M1.4 8.2V1.6C1.4 1.1 1.8 0.9 2.3 1L17.4 4.4C18 4.6 18.3 5 18.3 5.6V15.6C18.3 16.2 17.9 16.5 17.3 16.5H15.2" fill="none" stroke="#ecc956" stroke-width="0.9"/><rect x="0.4" y="10" width="2.3" height="5.2" rx="1.1" fill="#e8c242"/><rect x="4.1" y="8.8" width="2.3" height="7.6" rx="1.1" fill="#e8c242"/><rect x="7.6" y="7.8" width="2.4" height="9.8" rx="1.1" fill="#e8c242"/><rect x="11.1" y="6.4" width="2.5" height="12.4" rx="1.1" fill="#e8c242"/></svg><span class="tt" style="left:39.5px;letter-spacing:-0.08px">Power BI</span></div>
<div class="abs btn" style="left:2794.4px;top:617px;width:63.6px;height:407px;background:#fff"></div>
<div class="abs" style="left:2796px;top:679px;width:60px;height:2px;background:#b9bfcc"></div>
<div class="abs" style="left:2796px;top:960.6px;width:60px;height:2px;background:#b9bfcc"></div>
<svg class="abs" style="left:2811.4px;top:634.1px" width="30" height="30" viewBox="0 0 30 30"><circle cx="11.3" cy="11.4" r="7.4" fill="none" stroke="#0a0d1c" stroke-width="2.6"/><path d="M16.6 16.8L26.2 26.2" stroke="#0a0d1c" stroke-width="2.6"/><path d="M11.4 7.5V15.3M7.5 11.4H15.3" stroke="#0a0d1c" stroke-width="2.7"/></svg>
<div class="abs" style="left:2816.2px;top:705px;width:15.8px;height:232px;border-radius:4px;background:#c3c6d0"></div>
<svg class="abs" style="left:2804px;top:796px" width="40" height="40" viewBox="0 0 40 40"><circle cx="20.25" cy="20.25" r="16.2" fill="#f0f1f4" stroke="#6b7592" stroke-width="3.7"/></svg>
<svg class="abs" style="left:2811.4px;top:978.6px" width="30" height="30" viewBox="0 0 30 30"><circle cx="11.3" cy="11.4" r="7.4" fill="none" stroke="#0a0d1c" stroke-width="2.6"/><path d="M16.6 16.8L26.2 26.2" stroke="#0a0d1c" stroke-width="2.6"/><path d="M7.5 11.4H15.3" stroke="#0a0d1c" stroke-width="2.7"/></svg>
<div class="abs btn" style="left:2794.2px;top:1041.4px;width:63.6px;height:63.4px"></div>
<svg class="abs" style="left:2812.6px;top:1059.2px" width="26.6" height="28.4" viewBox="0 0 30 32"><path d="M12.2 2.6H17.8L18.5 6.6L21.6 8.4L25.4 7L28.2 11.8L25.1 14.4V17.6L28.2 20.2L25.4 25L21.6 23.6L18.5 25.4L17.8 29.4H12.2L11.5 25.4L8.4 23.6L4.6 25L1.8 20.2L4.9 17.6V14.4L1.8 11.8L4.6 7L8.4 8.4L11.5 6.6Z" fill="none" stroke="#0a0d1c" stroke-width="2.95" stroke-linejoin="round"/><circle cx="15" cy="16" r="4.4" fill="none" stroke="#0a0d1c" stroke-width="2.95"/></svg>
<div class="abs btn" style="left:2794.2px;top:1120.6px;width:63.6px;height:64px;background:#fff"></div>
<svg class="abs" style="left:2811px;top:1138px" width="30" height="30" viewBox="0 0 30 30"><circle cx="15" cy="15.2" r="12" fill="none" stroke="#0a0d1c" stroke-width="2.6"/><path d="M15 7V16M10.6 11.9L15 16.3L19.4 11.9M8.4 20.2H21.6" fill="none" stroke="#0a0d1c" stroke-width="2.9"/></svg>
</div>
<div class="abs" style="left:0;top:1470px;width:2878px;height:84px;background:linear-gradient(to bottom,rgba(20,20,30,0) 0%,rgba(20,20,30,0.012) 30%,rgba(20,20,30,0.04) 58%,rgba(20,20,30,0.078) 82%,rgba(20,20,30,0.115) 100%);-webkit-mask-image:linear-gradient(to right,transparent 10px,#000 150px,#000 2450px,transparent 2800px);mask-image:linear-gradient(to right,transparent 10px,#000 150px,#000 2450px,transparent 2800px)"></div>
<svg class="abs" style="left:0;top:1534px" width="24" height="20" viewBox="0 0 24 20"><path d="M0 9C2 15 8 19.4 20 20H0Z" fill="#c9c8b8"/><path d="M0 8.6L2.4 13.6V20H0Z" fill="#8c8545"/></svg>
<svg class="abs" style="left:2858px;top:1534px" width="24" height="20" viewBox="0 0 24 20"><path d="M24 6C23 13 18 19 8 20H24Z" fill="#3f4a30"/></svg>
</body></html>
